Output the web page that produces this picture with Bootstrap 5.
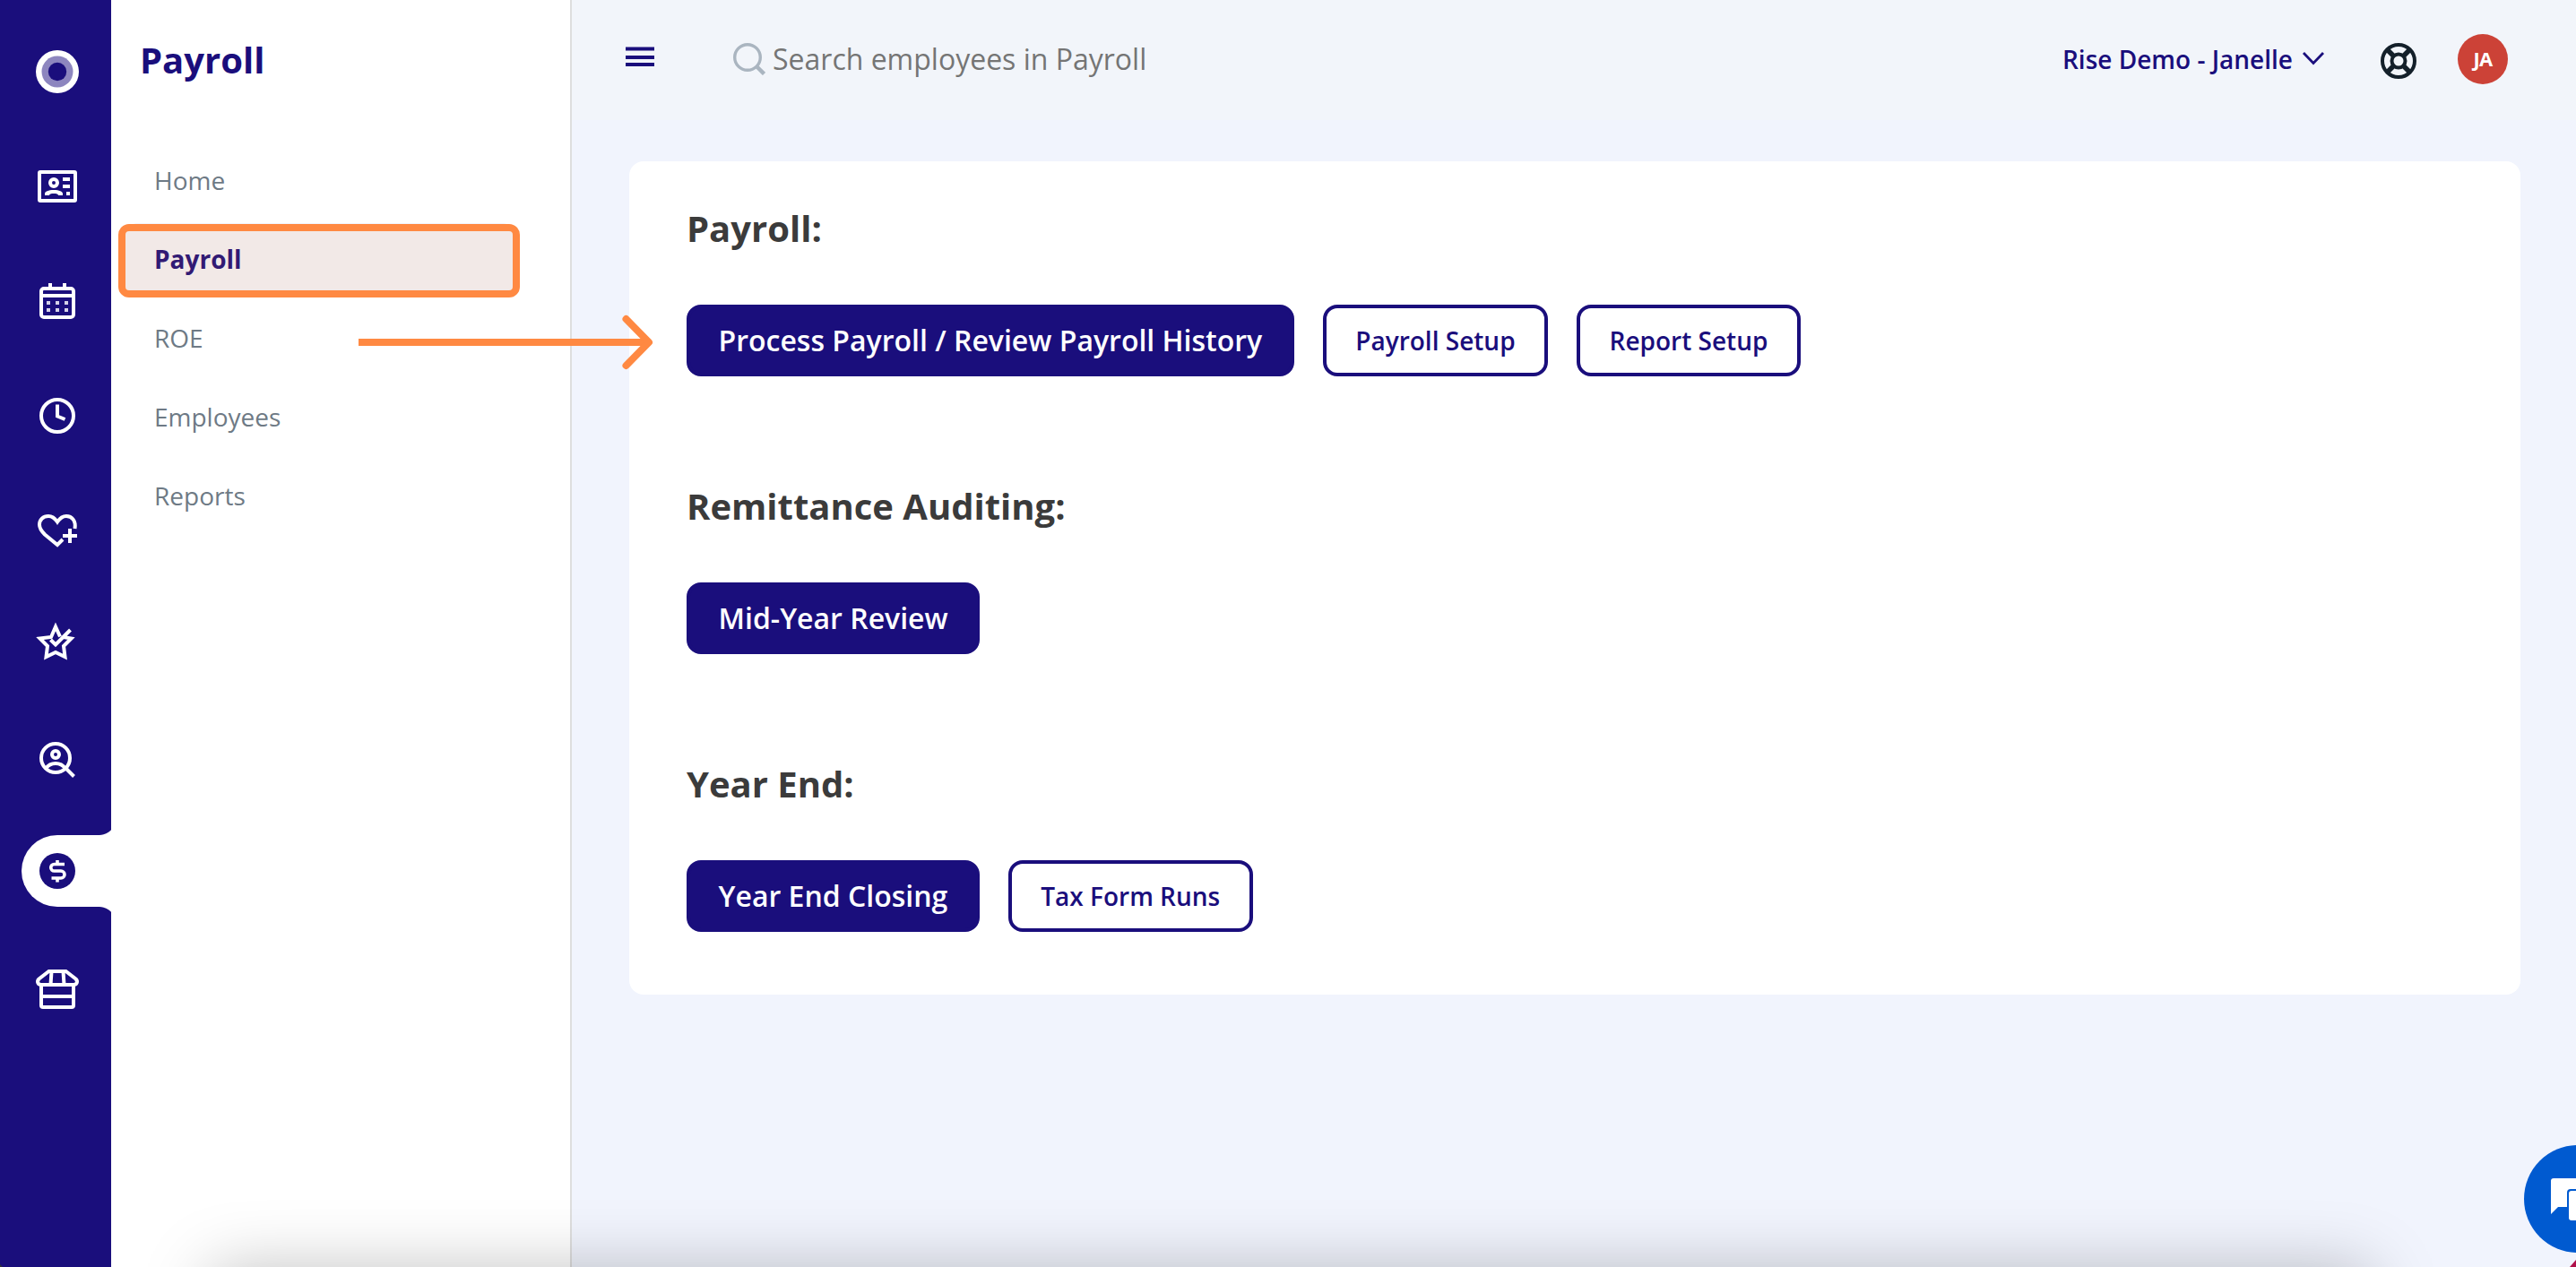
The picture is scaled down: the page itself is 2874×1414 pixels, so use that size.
<!DOCTYPE html>
<html lang="en">
<head>
<meta charset="utf-8">
<meta name="viewport" content="width=device-width, initial-scale=1">
<title>Payroll</title>
<link rel="stylesheet" href="https://cdn.jsdelivr.net/npm/bootstrap@5.3.0/dist/css/bootstrap.min.css">
<style>
:root{--navy:#1a0e7c;--orange:#ff8942}
body{font-family:"Open Sans","Noto Sans",sans-serif;background:#f1f4fd;height:1414px;overflow:hidden;position:relative}
svg{display:block;flex:none}
.rail{width:124px;background:var(--navy);padding-top:16px;flex:none}
.rail-item{height:128px;display:flex;align-items:center;padding-left:40px}
.rail-item svg{width:48px;height:48px;fill:none;stroke:#fff;stroke-width:4;overflow:visible}
.rail-item.current{padding:0 0 8px 24px}
.pill{position:relative;width:100px;height:80px;background:#fff;border-radius:40px 0 0 40px;display:flex;align-items:center;padding-left:16px}
.pill::before,.pill::after{content:"";position:absolute;right:0;width:14px;height:20px}
.pill::before{bottom:100%;background:radial-gradient(circle at 0 0,transparent 19.5px,#fff 20.5px)}
.pill::after{top:100%;background:radial-gradient(circle at 0 100%,transparent 19.5px,#fff 20.5px)}
.side{width:514px;background:#fff;border-right:2px solid #dedede;flex:none}
.side-title{font-size:40px;font-weight:700;line-height:60px;color:var(--navy);padding:37px 0 0 32px;margin:0 0 64px}
.side .nav{padding:0 60px 0 14px;gap:8px}
.side .nav-link{height:80px;line-height:80px;padding:0 0 0 34px;font-size:28px;color:#6e7a85;border-radius:16px}
.side .nav-link.active{background:#f1f4fc;color:var(--navy);font-weight:700}
.topbar{height:134px;background:#f2f5fa;padding:0 76px 0 60px}
.topbar-in{height:132px}
.burger{margin-bottom:4px}
.search-icon{margin-left:88px}
.search-text{font-size:32px;color:#757575;line-height:44px}
.account{font-size:28px;font-weight:600;color:var(--navy);line-height:40px;padding-bottom:1px}
.caret-icon{margin:0 0 3px 10px}
.help-icon{margin:4px 46px 0 62px}
.avatar{width:56px;height:56px;background:#cc4237;color:#fff;font-size:22px;font-weight:700;letter-spacing:-.8px;padding-bottom:1px}
.panel{margin:46px 62px 0 64px;height:930px;border:0;border-radius:16px;padding:48px 64px 0}
.group{margin-bottom:118px}
.group h2{font-size:40px;font-weight:700;line-height:54px;color:#3b3b3b;margin:0 0 58px}
.group-actions{gap:32px}
.btn-main,.btn-line{height:80px;border-radius:16px;border:4px solid var(--navy);font-weight:600;display:flex;align-items:center;justify-content:center}
.btn-main{background:var(--navy);color:#fff;font-size:32px;padding:0 31.5px 1px}
.btn-line{background:#fff;color:var(--navy);font-size:28px;padding:0 32.5px 1px}
.callout{position:absolute;left:132px;top:250px;width:448px;height:82px;border:8px solid var(--orange);border-radius:12px;background:rgba(255,137,50,.1)}
.arrow{position:absolute;left:400px;top:346px}
.chat{position:absolute;left:2816px;top:1278px}
.dock{position:absolute;left:0;right:0;bottom:0;height:120px;overflow:hidden}
.dock-shadow{margin:124px 230px 0 236px;height:100px;box-shadow:0 0 76px rgba(0,0,0,.26)}
.corner{position:absolute;left:0;bottom:0;width:6px;height:6px;background:radial-gradient(circle at 100% 0,transparent 6px,#30333a 7px)}
</style>
</head>
<body>
<div class="d-flex h-100">
  <nav class="rail">
    <div class="rail-item"><svg viewBox="0 0 48 48"><g stroke="none"><circle cx="24" cy="24" r="24" fill="#fff"/><circle cx="24" cy="24" r="17.5" fill="#8d86bf"/><circle cx="24" cy="24" r="10.2" fill="#1a0e7c"/></g></svg></div>
    <div class="rail-item"><svg viewBox="0 0 48 48"><rect x="4" y="8" width="40" height="32" rx="1"/><circle cx="20" cy="20" r="4"/><path d="M10 34v-2c0-2 4-4 10-4s10 2 10 4v2h-5c0-1.5-2-2-5-2s-5 .5-5 2zM30 14h8v4h-8zM30 22h8v4h-8zM34 30h4v4h-4z" fill="#fff" stroke="none"/></svg></div>
    <div class="rail-item"><svg viewBox="0 0 48 48"><rect x="6" y="10" width="36" height="32" rx="3"/><path d="M6 18h36M16 4v6M32 4v6"/><path d="M12 24h4v4h-4zM22 24h4v4h-4zM32 24h4v4h-4zM12 32h4v4h-4zM22 32h4v4h-4zM32 32h4v4h-4z" fill="#d5d2e8" stroke="none"/></svg></div>
    <div class="rail-item"><svg viewBox="0 0 48 48"><circle cx="24" cy="24" r="18"/><path d="M24 11.500v13l8.500 3.500"/></svg></div>
    <div class="rail-item"><svg viewBox="0 0 48 48"><path d="M43.500 22C45 13 40 8 34 8c-4 0-7 2-10 6.500C21 10 18 8 14 8 8 8 4 12 4 17.500c0 4.500 2.500 7.500 6 11L24 40l6-6M38 22v16M30 30h16"/></svg></div>
    <div class="rail-item"><svg viewBox="0 0 48 48"><path d="M27 14.500L22 3.500l-5 11.500L4.500 16.500l8.500 8.500-1.500 12L22 32l10.500 5L31 25l8.500-8.500-9-1.500M16.500 18l5.500 5.500L38.500 7"/></svg></div>
    <div class="rail-item"><svg viewBox="0 0 48 48"><circle cx="22" cy="22" r="16"/><circle cx="22" cy="18" r="4"/><path d="M11.500 33.500C14 29.500 17 28 22 28s8 1.500 10.500 5.500M33 33l9.500 9.500"/></svg></div>
    <div class="rail-item current"><div class="pill"><svg viewBox="0 0 48 48"><circle cx="24" cy="24" r="20" fill="#1a0e7c" stroke="none"/><path d="M32 16.500H20.500a3.750 3.750 0 0 0 0 7.500h7.500a3.900 3.900 0 0 1 0 8H17.500M24 12v5M24 32v4.500" stroke-width="3.600"/></svg></div></div>
    <div class="rail-item"><svg viewBox="0 0 48 48"><path d="M14.500 4h19l11 8.500c3 3 1 6.500-2.500 6.500H6c-3.500 0-5.500-3.500-2.500-6.500zM17.500 4l-1 15M30.500 4l1 15M6 20v22q0 2 2 2h32q2 0 2-2V20M6 32h36"/></svg></div>
  </nav>
  <aside class="side">
    <h1 class="side-title">Payroll</h1>
    <nav class="nav flex-column">
      <a class="nav-link">Home</a>
      <a class="nav-link active">Payroll</a>
      <a class="nav-link">ROE</a>
      <a class="nav-link">Employees</a>
      <a class="nav-link">Reports</a>
    </nav>
  </aside>
  <main class="flex-grow-1">
    <header class="topbar">
      <div class="topbar-in d-flex align-items-center">
        <svg class="burger" width="32" height="24" viewBox="0 0 32 24" fill="#1a0e7c"><path d="M0 .5h32v4H0zM0 10h32v4H0zM0 18h32v4H0z"/></svg>
        <svg class="search-icon" width="36" height="36" viewBox="0 0 36 36" fill="none" stroke="#aab5c0" stroke-width="3.400"><circle cx="16" cy="16" r="14.300"/><path d="M26 26l8.500 8.500" stroke-width="4.500"/></svg>
        <span class="search-text ps-2">Search employees in Payroll</span>
        <div class="ms-auto d-flex align-items-center">
          <span class="account">Rise Demo - Janelle</span>
          <svg class="caret-icon" width="26" height="16" viewBox="0 0 26 16" fill="none" stroke="#1a0e7c" stroke-width="2.800"><path d="M2 2l11 11.500L24 2"/></svg>
          <svg class="help-icon" width="40" height="40" viewBox="0 0 40 40" fill="none" stroke="#14202a" stroke-width="4"><circle cx="20" cy="20" r="18"/><circle cx="20" cy="20" r="7.500"/><path d="M7 7l8 8M33 7l-8 8M7 33l8-8M33 33l-8-8" stroke-width="5.500"/></svg>
          <div class="avatar rounded-circle d-flex align-items-center justify-content-center">JA</div>
        </div>
      </div>
    </header>
    <section class="panel card">
      <div class="group">
        <h2>Payroll:</h2>
        <div class="group-actions d-flex"><button class="btn-main">Process Payroll / Review Payroll History</button><button class="btn-line">Payroll Setup</button><button class="btn-line">Report Setup</button></div>
      </div>
      <div class="group">
        <h2>Remittance Auditing:</h2>
        <div class="group-actions d-flex"><button class="btn-main">Mid-Year Review</button></div>
      </div>
      <div class="group mb-0">
        <h2>Year End:</h2>
        <div class="group-actions d-flex"><button class="btn-main">Year End Closing</button><button class="btn-line">Tax Form Runs</button></div>
      </div>
    </section>
  </main>
</div>
<div class="dock"><div class="dock-shadow"></div></div>
<div class="corner"></div>
<div class="callout"></div>
<svg class="arrow" width="332" height="72" viewBox="0 0 332 72" fill="none" stroke="#ff8942" stroke-width="8"><path d="M0 36h322"/><path d="M298.500 10L324 36l-25.500 26" stroke-linecap="round" stroke-linejoin="round"/></svg>
<svg class="chat" width="58" height="136" viewBox="0 0 58 136"><circle cx="60" cy="60" r="60" fill="#005ad0"/><path d="M33 37h30v32H38l-8 8V40q0-3 3-3z" fill="#fff"/><rect x="48" y="49" width="40" height="36" rx="4" fill="#005ad0"/><rect x="50" y="51" width="40" height="33" rx="3" fill="#fff"/><path d="M51 136l7-8v8z" fill="#b0104a"/></svg>
<script src="https://cdn.jsdelivr.net/npm/bootstrap@5.3.0/dist/js/bootstrap.bundle.min.js"></script>
</body>
</html>
